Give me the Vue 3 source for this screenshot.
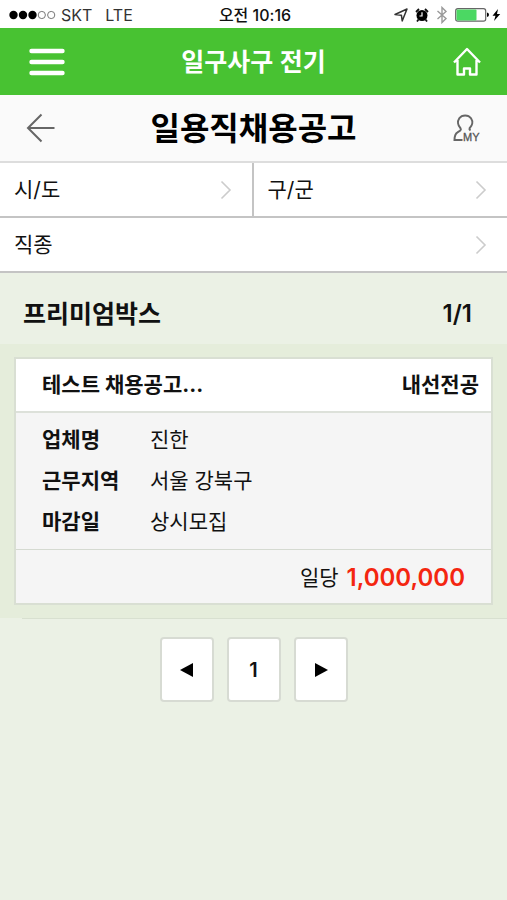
<script setup>
import { ref } from 'vue'

const filters = ref([
  { id: 'province', label: '시/도', wide: false },
  { id: 'district', label: '구/군', wide: false },
  { id: 'job', label: '직종', wide: true },
])

const posting = {
  title: '테스트 채용공고...',
  trade: '내선전공',
  details: [
    { name: '업체명', value: '진한' },
    { name: '근무지역', value: '서울 강북구' },
    { name: '마감일', value: '상시모집' },
  ],
  payType: '일당',
  pay: '1,000,000',
}
</script>

<template>
  <div class="page">
    <div class="status">
      <div class="carrier">
        <svg width="47" height="10" viewBox="0 0 47 10">
          <circle cx="4.5" cy="5" r="4.2" />
          <circle cx="14" cy="5" r="4.2" />
          <circle cx="23.5" cy="5" r="4.2" />
          <circle class="ring" cx="32.8" cy="5" r="3.6" />
          <circle class="ring" cx="42.2" cy="5" r="3.6" />
        </svg>
        <span>SKT</span>
        <span class="network">LTE</span>
      </div>
      <time class="clock">오전 10:16</time>
      <div class="indicators">
        <svg width="14" height="14" viewBox="0 0 14 14">
          <path d="M1 6.5 13 1 8.2 13 7.4 7.2Z" fill="none" stroke="#333" stroke-width="1.5" stroke-linejoin="round" />
        </svg>
        <svg width="14" height="14" viewBox="0 0 14 14">
          <circle cx="7" cy="7.5" r="5.5" />
          <path d="M1 4 4 1M10 1l3 3M3.5 11.5 2 13.5M10.5 11.5l1.5 2" stroke="#111" stroke-width="1.8" />
          <path d="M7 4.2V8H4.5" fill="none" stroke="#fff" stroke-width="1.2" />
        </svg>
        <svg width="12" height="18" viewBox="0 0 12 18">
          <path d="M1.5 5 10 12.5 6 16.5V1.5L10 5.5 1.5 13" fill="none" stroke="#999" stroke-width="1.4" />
        </svg>
        <svg width="46" height="14" viewBox="0 0 46 14">
          <rect x=".7" y=".7" width="30" height="12.5" rx="2.2" fill="#fff" stroke="#666" stroke-width="1.2" />
          <rect x="1.5" y="1.5" width="20" height="11" rx="1" fill="#4bd863" />
          <path d="M32 4.5q2 .5 2 2.3t-2 2.3Z" />
          <path d="M43 1 37.5 7.7h3L39 13 45.2 6h-3.2Z" />
        </svg>
      </div>
    </div>

    <header class="brand">
      <button class="icon-button menu" type="button" aria-label="메뉴">
        <svg width="36" height="28" viewBox="0 0 36 28">
          <path d="M2.5 3h31M2.5 14h31M2.5 25h31" stroke="#fff" stroke-width="4.4" stroke-linecap="round" />
        </svg>
      </button>
      <span class="brand-name">일구사구 전기</span>
      <a class="icon-button" href="#" aria-label="홈">
        <svg width="30" height="30" viewBox="0 0 30 30">
          <path d="M2 15.5 15 2 28 15.5M5.5 13V27.5H12V21.5H18V27.5H24.5V13" fill="none" stroke="#fff" stroke-width="2.4" stroke-linejoin="round" />
        </svg>
      </a>
    </header>

    <div class="heading">
      <button class="icon-button" type="button" aria-label="뒤로">
        <svg width="30" height="30" viewBox="0 0 30 30">
          <path d="M15.5 1.5 2 15 15.5 28.5M2 15H28.5" fill="none" stroke="#666" stroke-width="2" />
        </svg>
      </button>
      <h1>일용직채용공고</h1>
      <a class="icon-button" href="#" aria-label="내 정보">
        <svg width="28" height="28" viewBox="0 0 28 28">
          <path d="M9.5 26H1.5Q1.5 20 4.5 18.3L7.3 16.5Q8.3 15.5 7.5 14.2C4.8 11.5 4.2 7.5 6.3 4.3C9 .4 15.3.4 18 4.3C20.2 7.5 19.5 11.5 16.6 14.2Q16 15.5 17.5 16.5" fill="none" stroke="#666" stroke-width="2" />
          <text x="10" y="27">MY</text>
        </svg>
      </a>
    </div>

    <form class="filters">
      <div v-for="f in filters" :key="f.id" class="filter" :class="{ wide: f.wide }">
        <select :id="f.id" :aria-label="f.label">
          <option>{{ f.label }}</option>
        </select>
        <svg class="chevron" width="12" height="20" viewBox="0 0 12 20">
          <path d="M1.5 1.5 10 10 1.5 18.5" fill="none" stroke="#ccc" stroke-width="1.6" />
        </svg>
      </div>
    </form>

    <main>
      <div class="section-head">
        <h2>프리미엄박스</h2>
        <span class="count">1/1</span>
      </div>

      <section class="premium">
        <article class="card">
          <div class="card-head">
            <h3>{{ posting.title }}</h3>
            <span class="trade">{{ posting.trade }}</span>
          </div>
          <dl>
            <template v-for="d in posting.details" :key="d.name">
              <dt>{{ d.name }}</dt>
              <dd>{{ d.value }}</dd>
            </template>
          </dl>
          <div class="pay">
            <span>{{ posting.payType }}</span>
            <strong>{{ posting.pay }}</strong>
          </div>
        </article>
      </section>
      <div class="rule"></div>

      <nav class="pager" aria-label="페이지">
        <button type="button" aria-label="이전">
          <svg width="14" height="16" viewBox="0 0 14 16"><path d="M0 8 13 1V15Z" /></svg>
        </button>
        <button type="button">1</button>
        <button type="button" aria-label="다음">
          <svg width="14" height="16" viewBox="0 0 14 16"><path d="M14 8 1 1V15Z" /></svg>
        </button>
      </nav>
    </main>
  </div>
</template>

<style>
body {
  background: #ebf1e5;
}
</style>

<style scoped>
.page {
  font-family: Inter, "Noto Sans CJK KR", sans-serif;
  font-size: 21px;
  line-height: 32px;
  color: #111;
}
svg {
  display: block;
  flex: none;
}
h1, h2, h3, dl, dd {
  margin: 0;
}
button {
  font: inherit;
  color: inherit;
  cursor: pointer;
}
.status {
  display: grid;
  grid-template-columns: 1fr auto 1fr;
  align-items: center;
  height: 28px;
  padding: 0 6px 0 9px;
  background: #fff;
  font-size: 16px;
  line-height: 30px;
}
.carrier, .indicators {
  display: flex;
  align-items: center;
  gap: 5px;
  color: #333;
}
.ring {
  fill: #fff;
  stroke: #777;
}
.network {
  margin-left: 8px;
}
.clock {
  font-weight: 500;
}
.indicators {
  justify-content: flex-end;
  gap: 7px;
}
.brand, .heading {
  display: grid;
  grid-template-columns: 1fr auto 1fr;
  align-items: center;
}
.brand {
  height: 67px;
  padding: 0 25px;
  background: #48c232;
  color: #fff;
}
.brand-name {
  font-size: 25px;
  font-weight: 600;
}
.icon-button {
  display: block;
  justify-self: start;
  padding: 0;
  border: 0;
  background: none;
}
.icon-button:last-child {
  justify-self: end;
}
.menu {
  padding-left: 4px;
}
.heading {
  height: 66px;
  padding: 0 26px;
  background: #fafafa;
  border-bottom: 2px solid #ddd;
}
.heading text {
  font: 11px "Liberation Sans", sans-serif;
  fill: #555;
  stroke: #555;
  stroke-width: .3px;
}
h1 {
  padding-top: 2px;
  font-size: 32px;
  line-height: 44px;
  color: #000;
}
.filters {
  display: grid;
  grid-template-columns: 1fr 1fr;
  background: #fff;
}
.filter {
  display: grid;
  align-items: center;
  height: 53px;
  border-bottom: 2px solid #c4c4c4;
}
.filter:first-child {
  border-right: 2px solid #c4c4c4;
}
.filter.wide {
  grid-column: 1 / -1;
}
.filter select {
  grid-area: 1 / 1;
  width: 100%;
  height: 100%;
  padding: 0 40px 0 14px;
  border: 0;
  appearance: none;
  background: none;
  font: inherit;
  color: inherit;
}
.chevron {
  grid-area: 1 / 1;
  justify-self: end;
  margin-right: 20px;
  pointer-events: none;
}
.section-head {
  display: flex;
  align-items: center;
  justify-content: space-between;
  height: 61px;
  padding: 10px 35px 0 23px;
}
h2 {
  font-size: 25px;
  line-height: 36px;
}
.count {
  font-size: 24px;
  font-weight: 600;
}
.premium {
  padding: 13px 14px;
  background: #e5eddb;
}
.rule {
  height: 1px;
  margin-left: 22px;
  background: #d8e0d0;
}
.card {
  border: 2px solid #d9dfd3;
  background: #f5f5f5;
}
.card-head {
  display: flex;
  align-items: center;
  justify-content: space-between;
  height: 52px;
  padding: 0 12px 0 26px;
  background: #fff;
  border-bottom: 2px solid #dde1da;
}
h3 {
  font-size: 21px;
}
.trade {
  font-weight: 700;
}
dl {
  display: grid;
  grid-template-columns: 108px 1fr;
  grid-auto-rows: 41px;
  align-items: center;
  padding: 6px 26px 7px;
  border-bottom: 1px solid #d5dad1;
}
dt {
  font-weight: 700;
}
.pay {
  display: flex;
  align-items: center;
  justify-content: flex-end;
  gap: 8px;
  height: 50px;
  padding: 3px 26px 0;
}
.pay strong {
  font-size: 24px;
  font-weight: 600;
  color: #f42610;
}
.pager {
  display: flex;
  justify-content: center;
  gap: 13px;
  padding: 18px 0;
}
.pager button {
  display: grid;
  place-items: center;
  width: 54px;
  height: 65px;
  padding: 0;
  border: 2px solid #d7dbd3;
  border-radius: 4px;
  background: #fff;
  font-size: 20px;
  font-weight: 600;
}
</style>
